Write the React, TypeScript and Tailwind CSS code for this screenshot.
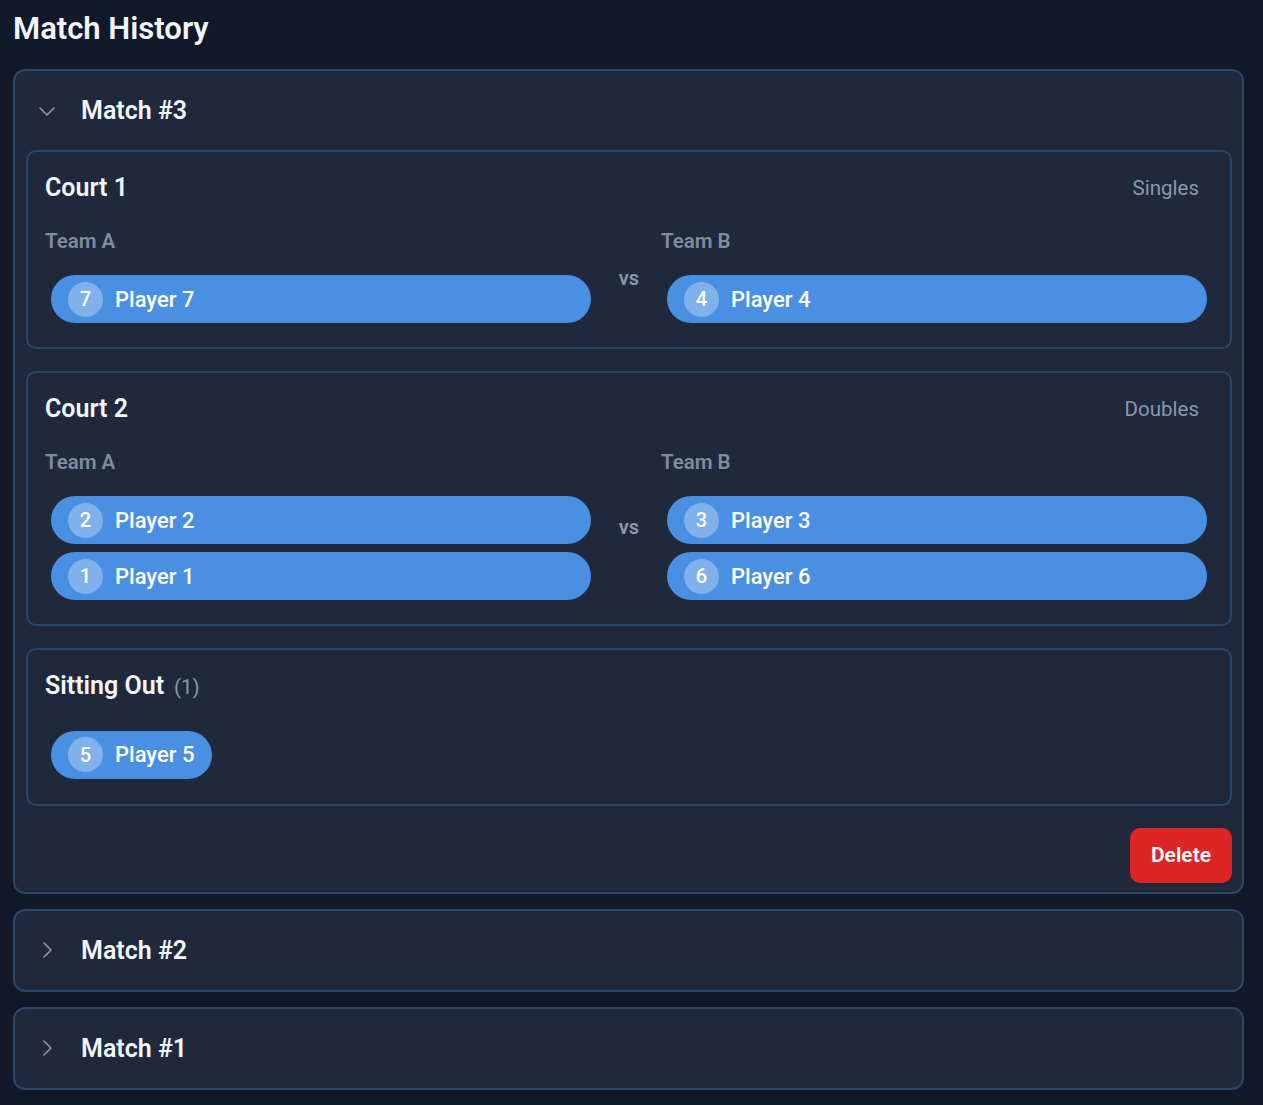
import { useState } from 'react'

interface Player {
    id: number
    name: string
}

interface Court {
    name: string
    kind: string
    teamA: Player[]
    teamB: Player[]
}

const courts: Court[] = [
    { name: 'Court 1', kind: 'Singles', teamA: [{ id: 7, name: 'Player 7' }], teamB: [{ id: 4, name: 'Player 4' }] },
    {
        name: 'Court 2',
        kind: 'Doubles',
        teamA: [
            { id: 2, name: 'Player 2' },
            { id: 1, name: 'Player 1' },
        ],
        teamB: [
            { id: 3, name: 'Player 3' },
            { id: 6, name: 'Player 6' },
        ],
    },
]

const sittingOut: Player[] = [{ id: 5, name: 'Player 5' }]

function Chevron({ open }: { open: boolean }) {
    return (
        <svg width="20" height="20" viewBox="0 0 20 20" fill="none" className={open ? 'shrink-0' : 'shrink-0 -rotate-90'}>
            <path d="M3 7l7 7 7-7" stroke="#8a98ad" strokeWidth="1.6" strokeLinecap="round" strokeLinejoin="round" />
        </svg>
    )
}

function PlayerPill({ player, full = true }: { player: Player; full?: boolean }) {
    return (
        <div className={`flex h-12 items-center gap-3 rounded-full bg-[#4a90e2] pl-[17px] pr-[17px] ${full ? 'w-full' : 'w-fit'}`}>
            <span className="flex h-[35px] w-[35px] items-center justify-center rounded-full bg-white/30 text-[20px] font-medium text-white">{player.id}</span>
            <span className="text-[22px] font-medium text-white">{player.name}</span>
        </div>
    )
}

function TeamColumn({ label, players }: { label: string; players: Player[] }) {
    return (
        <div className="flex min-w-0 flex-col">
            <p className="text-[20.5px] font-semibold leading-7 text-[#7f8ca0]">{label}</p>
            <div className="mt-[14px] flex flex-col gap-2 px-1.5 py-1.5">
                {players.map((player) => (
                    <PlayerPill key={player.id} player={player} />
                ))}
            </div>
        </div>
    )
}

function CourtCard({ court }: { court: Court }) {
    return (
        <div className="rounded-[10px] border-2 border-[#2b4668] bg-[#1f293b] px-[17px] pt-[20px] pb-[18px]">
            <div className="flex items-center justify-between pr-[14px]">
                <h3 className="text-[25px] font-semibold leading-8 text-[#f1f5f9]">{court.name}</h3>
                <span className="text-[20.5px] text-[#8a98ad]">{court.kind}</span>
            </div>
            <div className="mt-[23px] grid grid-cols-[1fr_32px_1fr] items-center gap-4">
                <TeamColumn label="Team A" players={court.teamA} />
                <span className="text-center text-[20px] font-semibold text-[#8a98ad]">vs</span>
                <TeamColumn label="Team B" players={court.teamB} />
            </div>
        </div>
    )
}

function MatchCard({ title, open, onToggle }: { title: string; open: boolean; onToggle: () => void }) {
    return (
        <div className="rounded-xl border-2 border-[#2b4668] bg-[#1f293b]">
            <button onClick={onToggle} className="flex h-[79px] w-full items-center gap-6 pl-[22px] text-left">
                <Chevron open={open} />
                <span className="text-[25px] font-semibold text-[#f1f5f9]">{title}</span>
            </button>
            {open && (
                <div className="flex flex-col gap-[22px] pl-[11px] pr-[10px] pb-[9px]">
                    {courts.map((court) => (
                        <CourtCard key={court.name} court={court} />
                    ))}
                    <div className="rounded-[10px] border-2 border-[#2b4668] bg-[#1f293b] px-[17px] pt-[20px] pb-[25px]">
                        <div className="flex items-baseline gap-2.5">
                            <h3 className="text-[25px] font-semibold leading-8 text-[#f1f5f9]">Sitting Out</h3>
                            <span className="text-[20.5px] text-[#8a98ad]">({sittingOut.length})</span>
                        </div>
                        <div className="mt-[28px] flex flex-wrap gap-2 px-1.5">
                            {sittingOut.map((player) => (
                                <PlayerPill key={player.id} player={player} full={false} />
                            ))}
                        </div>
                    </div>
                    <div className="flex justify-end">
                        <button className="h-[55px] rounded-[10px] bg-[#dc2626] px-[21px] text-[21px] font-semibold text-white">Delete</button>
                    </div>
                </div>
            )}
        </div>
    )
}

export default function App() {
    const [openMatch, setOpenMatch] = useState<number | null>(3)

    return (
        <div className="min-h-[1105px] bg-[#101829] px-[13px] pt-[9px] pb-4 font-['Roboto',sans-serif]">
            <h1 className="text-[31px] font-semibold leading-10 text-[#f1f5f9]">Match History</h1>
            <div className="mt-[20px] flex flex-col gap-[15px] pr-[6px]">
                {[3, 2, 1].map((n) => (
                    <MatchCard key={n} title={`Match #${n}`} open={openMatch === n} onToggle={() => setOpenMatch(openMatch === n ? null : n)} />
                ))}
            </div>
        </div>
    )
}
